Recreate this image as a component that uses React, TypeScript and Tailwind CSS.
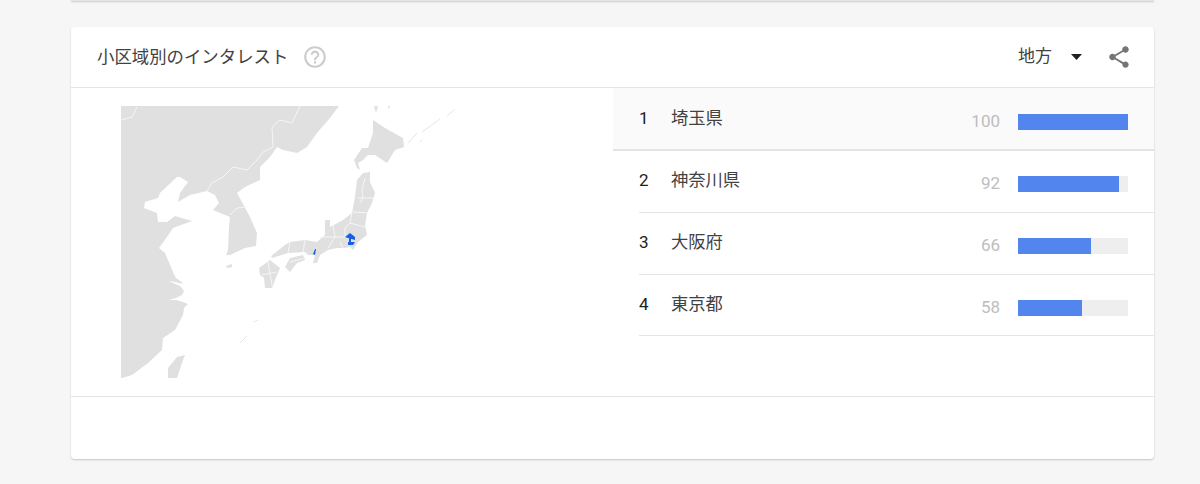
const rows = [
  { rank: 1, name: "埼玉県", value: 100 },
  { rank: 2, name: "神奈川県", value: 92 },
  { rank: 3, name: "大阪府", value: 66 },
  { rank: 4, name: "東京都", value: 58 },
];

function JapanMap() {
  return (
    <svg width="380" height="300" viewBox="100 90 380 300" className="block">
      <g fill="#e0e0e0">
        {/* asian mainland */}
        <path d="M121 106H339L330 118 317 133 307 147 297 153 283 150 277 147 270 157 260 167 260 180 245 187 237 193 242 202 250 217 257 233 256 246 245 248 230 255 226 255 228 250 229 227 230 217 213 210 219 203 215 195 207 191 190 195 178 202 180 193 188 182 180 177 177 177 160 193 158 198 145 202 144 208 157 213 158 222 167 222 175 216 192 221 173 228 167 237 159 248 165 253 173 272 176 278 183 283 181 283.5 175 282 169 281 173 283 180 286 184 291 182 295 176 298 169 300 176 300 183 302 188 304 184 308 183 315 175 330 163 338 162 350 148 363 132 375 122 378H121Z" />
        {/* taiwan */}
        <path d="M177 357 185 355 182 363 177 378H168V368Z" />
        {/* hokkaido */}
        <path d="M373 120 385 128 403 138 404 147 395 150 387 163 375 155 368 155 363 160 358 163 360 170 357 168 354 160 362 148 368 148 373 133Z" />
        {/* honshu */}
        <path d="M357 180 363 173 370 172 370 182 375 193 372 203 367 213 365 225 367 235 358 242 353 250 350 247 345 248 337 248 328 250 320 255 317 263 313 263 315 255 308 255 305 252 288 253 272 258 271 256 285 245 290 242 305 240 317 242 325 235 325 220 330 220 330 227 343 220 352 213 355 197Z" />
        {/* shikoku */}
        <path d="M285 267 290 258 303 255 305 260 297 263 290 272Z" />
        {/* kyushu */}
        <path d="M259 268 270 260 280 268 275 280 272 288 265 288 264 278 260 275Z" />
        <path d="M226 266 232 264 232 267 227 268Z" />
        <path d="M374 106H378L376 113Z" />
        <path d="M388 106H390L389 110Z" />
      </g>
      <g fill="none" stroke="#e6e6e6" strokeWidth="1">
        <path d="M408 143 417 133" />
        <path d="M422 132 440 119" />
        <path d="M447 116 455 109" />
        <path d="M420 142 422 140" />
        <path d="M240 343 247 336" />
        <path d="M254 322 258 320" />
      </g>
      <g fill="none" stroke="#f6f6f6" strokeWidth="1">
        <path d="M121 120 132 117 137 107" />
        <path d="M300 106 292 123 280 120 272 127 273 147 263 152 257 160 247 170 233 167 223 177 212 183 207 191" />
        <path d="M230 215 237 208 247 207" />
        <path d="M365 178 362 190 363 198 360 203" />
        <path d="M358 198 373 198" />
        <path d="M353 212 368 213" />
        <path d="M352 213 350 223 345 228 345 237" />
        <path d="M350 223 365 227" />
        <path d="M333 225 335 237 328 248" />
        <path d="M320 237 335 237 345 237" />
        <path d="M340 242 343 248" />
        <path d="M290 242 288 253" />
        <path d="M305 240 303 252" />
        <path d="M290 262 305 258" />
        <path d="M268 262 272 285" />
        <path d="M262 275 277 272" />
      </g>
      <g fill="#1a5fe3">
        <path d="M345 237 350 233 355 237 355 240 348 238Z" />
        <path d="M349 238H351V242H349Z" />
        <path d="M348 242H355L353 245H348Z" />
        <path d="M313 254 315 249H316L315 255Z" />
      </g>
    </svg>
  );
}

function Row({ rank, name, value, className }: { rank: number; name: string; value: number; className: string }) {
  return (
    <div className={`flex items-center pr-[26px] ${className}`}>
      <span className="mt-[2px] w-8 text-[17px] text-[#212121]">{rank}</span>
      <span className="mt-[2px] text-[17.3px] text-[#424242]">{name}</span>
      <span className="mt-[8px] ml-auto w-12 text-right text-[17px] text-[#bdbdbd]">{value}</span>
      <div className="mt-[8px] ml-[18px] h-4 w-[110px] bg-[#eeeeee]">
        <div className="h-full bg-[#5385ee]" style={{ width: `${value}%` }} />
      </div>
    </div>
  );
}

export default function App() {
  return (
    <div className="h-[484px] overflow-hidden bg-[#f6f6f6] font-['Roboto','Noto_Sans_CJK_JP',sans-serif]">
      <div className="mr-[46px] ml-[71px] h-px bg-[#e4e4e4] shadow-[0_1px_2px_rgba(0,0,0,0.25)]" />
      <div className="mt-[26px] ml-[71px] h-[432px] w-[1083px] rounded-sm bg-white shadow-[0_1px_2px_rgba(0,0,0,0.2)]">
        <div className="flex h-[61px] items-center border-b border-[#e4e4e4] pr-[22px] pl-[26px]">
          <span className="text-[17.4px] text-[#424242]">小区域別のインタレスト</span>
          <svg width="26" height="26" viewBox="0 0 24 24" fill="#cccccc" className="ml-[14px]">
            <path d="M11 18h2v-2h-2v2zm1-16C6.48 2 2 6.48 2 12s4.48 10 10 10 10-4.48 10-10S17.52 2 12 2zm0 18c-4.41 0-8-3.59-8-8s3.59-8 8-8 8 3.59 8 8-3.59 8-8 8zm0-14c-2.21 0-4 1.79-4 4h2c0-1.1.9-2 2-2s2 .9 2 2c0 2-3 1.75-3 5h2c0-2.25 3-2.5 3-5 0-2.21-1.79-4-4-4z" />
          </svg>
          <span className="ml-auto text-[17px] text-[#424242]">地方</span>
          <svg width="11" height="6" viewBox="0 0 11 6" fill="#212121" className="ml-[19px]">
            <path d="M0 0h11L5.5 6z" />
          </svg>
          <svg width="26" height="26" viewBox="0 0 24 24" fill="#757575" className="ml-[24px]">
            <path d="M18 16.08c-.76 0-1.44.3-1.96.77L8.91 12.7c.05-.23.09-.46.09-.7s-.04-.47-.09-.7l7.05-4.11c.54.5 1.25.81 2.04.81 1.66 0 3-1.34 3-3s-1.34-3-3-3-3 1.34-3 3c0 .24.04.47.09.7L8.04 9.81C7.5 9.31 6.79 9 6 9c-1.66 0-3 1.34-3 3s1.34 3 3 3c.79 0 1.5-.31 2.04-.81l7.12 4.16c-.05.21-.08.43-.08.65 0 1.61 1.31 2.92 2.92 2.92 1.61 0 2.92-1.31 2.92-2.92s-1.31-2.92-2.92-2.92z" />
          </svg>
        </div>

        <div className="flex h-[309px] border-b border-[#e4e4e4]">
          <div className="w-[542px] shrink-0 pt-[2px] pl-[29px]">
            <JapanMap />
          </div>
          <div className="flex-1">
            <div className="border-b-2 border-[#e4e4e4] bg-[#fafafa] pl-[26px]">
              <Row {...rows[0]} className="h-[61px] pb-[2px]" />
            </div>
            <div className="pl-[26px]">
              <Row {...rows[1]} className="h-[62px] border-b border-[#e4e4e4] pb-[3px]" />
              <Row {...rows[2]} className="h-[62px] border-b border-[#e4e4e4] pb-[3px]" />
              <Row {...rows[3]} className="h-[61px] border-b border-[#e4e4e4] pb-[3px]" />
            </div>
          </div>
        </div>
      </div>
    </div>
  );
}
